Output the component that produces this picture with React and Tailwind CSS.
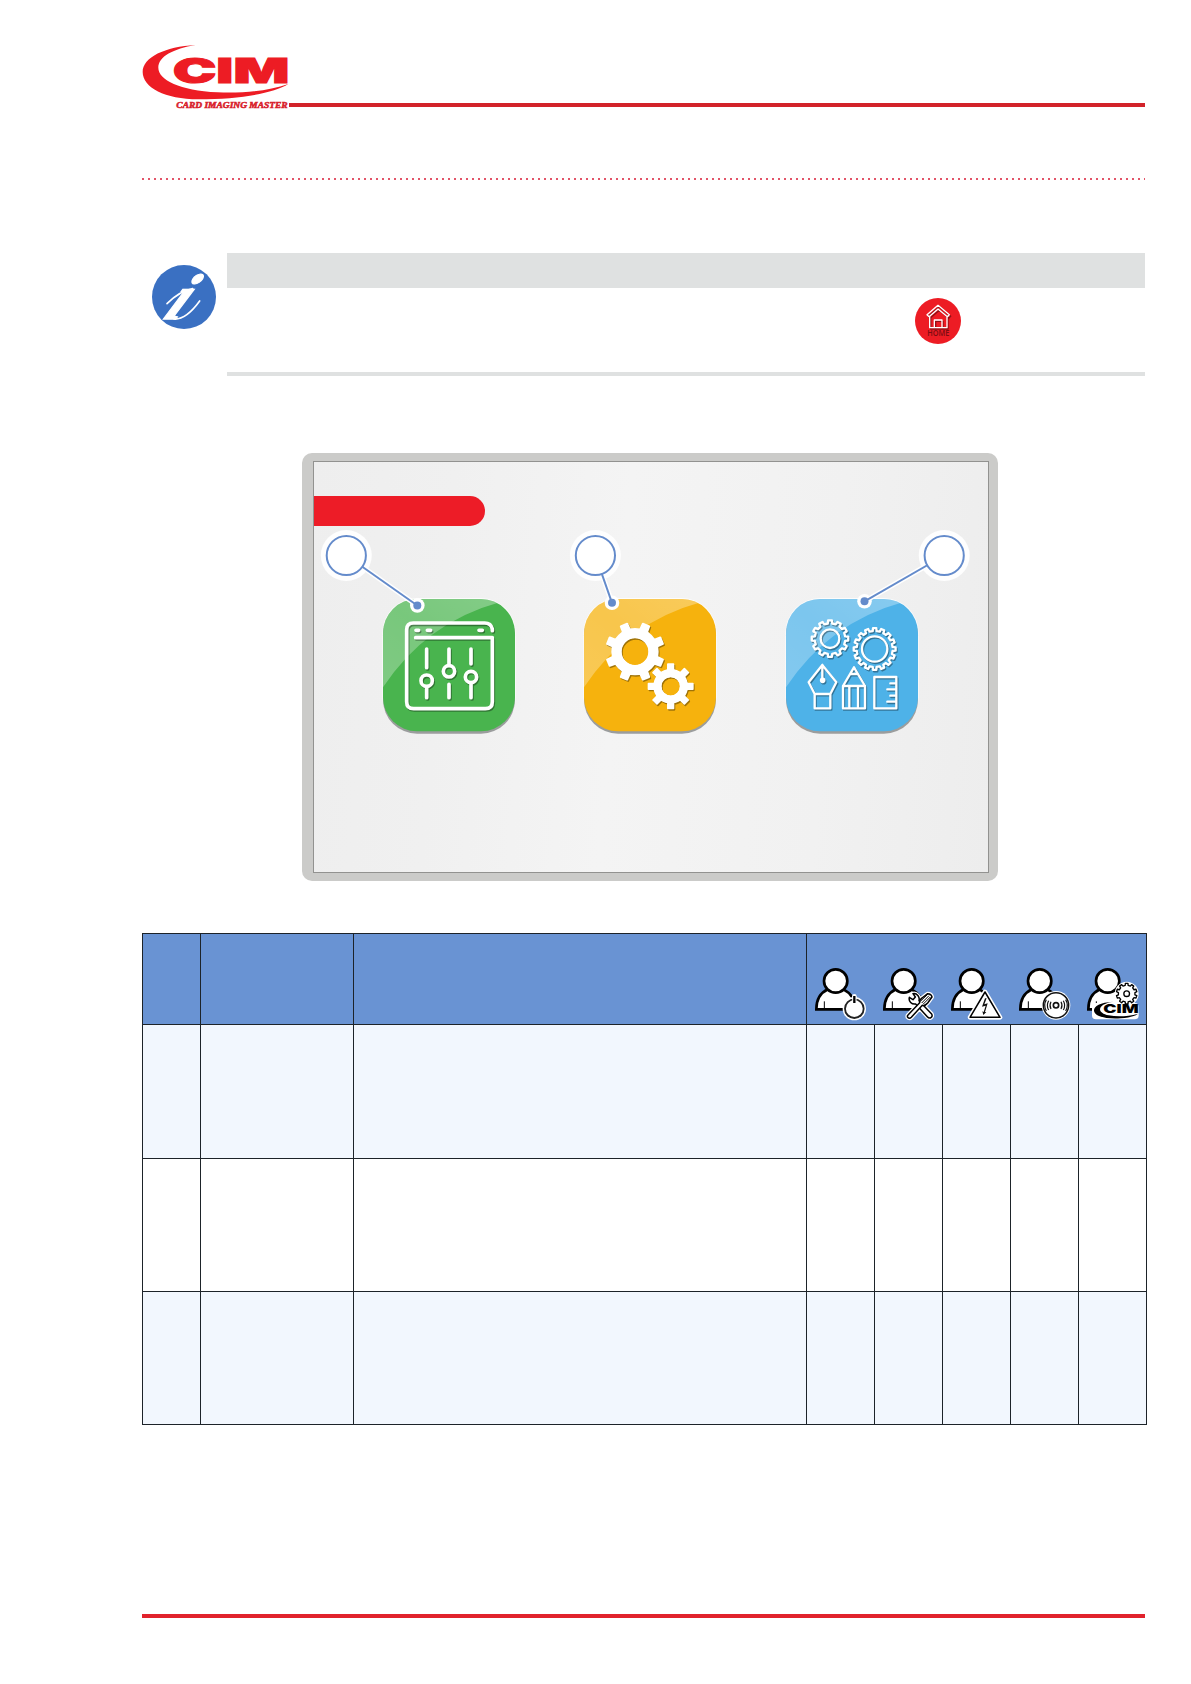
import React from 'react'

// builds the outline of a cog wheel, teeth are spread evenly round the centre
function gearPath(cx, cy, outer, inner, teeth, offset = 0, tip = 0.2, root = 0.28) {
  const step = (Math.PI * 2) / teeth
  const pts = []
  for (let i = 0; i < teeth; i++) {
    const a = i * step + offset - Math.PI / 2
    const corners = [
      [inner, -root],
      [outer, -tip],
      [outer, tip],
      [inner, root],
    ]
    corners.forEach(([r, k]) => {
      pts.push(`${(cx + r * Math.cos(a + k * step)).toFixed(1)} ${(cy + r * Math.sin(a + k * step)).toFixed(1)}`)
    })
  }
  return `M${pts.join('L')}Z`
}

const tableRows = [
  { id: 1, style: 'h-[134px] bg-[#f2f7fe]' },
  { id: 2, style: 'h-[133px] bg-white' },
  { id: 3, style: 'h-[133px] bg-[#f2f7fe]' },
]

function Logo() {
  return (
    <svg className="h-[65px] w-[147px] shrink-0 overflow-visible" viewBox="36 42 441 195">
      <path d="M197 45 C105 50 38 82 38 126 C38 172 105 208 205 208 C330 208 430 190 475 162 C410 185 330 190 262 187 C150 181 85 150 85 113 C85 80 130 56 197 45Z" fill="#ed1c24" />
      <text x="128" y="158" fontSize="102" fontWeight="900" fontFamily="Inter" textLength="350" lengthAdjust="spacingAndGlyphs" fill="#ed1c24" stroke="#ed1c24" strokeWidth="3">CIM</text>
      <text x="139" y="234" fontSize="25" fontWeight="700" fontStyle="italic" fontFamily="Liberation Serif" textLength="334" lengthAdjust="spacingAndGlyphs" fill="#d8202a" stroke="#d8202a" strokeWidth="1.5">CARD IMAGING MASTER</text>
    </svg>
  )
}

function InfoIcon() {
  return (
    <svg className="h-16 w-16 overflow-visible" viewBox="0 0 192 192">
      <circle cx="96" cy="96" r="96" fill="#3a70c2" />
      <g fill="none" stroke="#fff" strokeLinecap="round">
        <path d="M45 116C66 95 91 77 122 71" strokeWidth="5" />
        <path d="M66 162C91 164 119 141 143 108" strokeWidth="5" />
      </g>
      <text transform="translate(29 163) skewX(-30)" fontSize="194" fontWeight="700" fontStyle="italic" fontFamily="Liberation Serif" fill="#fff" stroke="#fff" strokeWidth="4">i</text>
    </svg>
  )
}

function HomeIcon() {
  return (
    <svg className="h-[46px] w-[46px]" viewBox="0 0 138 138">
      <circle cx="69" cy="69" r="69" fill="#ed1c24" />
      <g fill="none" strokeWidth="4" strokeLinejoin="round">
        <path d="M38 53L71 25L105 53L99 59L71 35L43 59ZM45 58V91H97V58M60 91V68H82V91" stroke="#8e1116" transform="translate(2 2)" />
        <path d="M36 50L69 22L103 50L97 56L69 33L42 56ZM44 55V89H96V55M58 89V66H81V89" stroke="#fff" />
      </g>
      <text x="37" y="114" fontSize="24" fontWeight="600" fontFamily="Open Sans" textLength="66" lengthAdjust="spacingAndGlyphs" fill="#7c0c12">HOME</text>
    </svg>
  )
}

/* glossy rounded tile, the icon is passed as children */
function Tile({ color, children }) {
  return (
    <svg className="h-[136px] w-[133px] overflow-visible" viewBox="0 0 399 408">
      <defs>
        <linearGradient id="gloss" x1="0" y1="1" x2="1" y2="0">
          <stop offset="0" stopColor="#fff" stopOpacity=".3" />
          <stop offset=".5" stopColor="#fff" stopOpacity=".26" />
          <stop offset="1" stopColor="#fff" stopOpacity=".32" />
        </linearGradient>
        <clipPath id="tileShape">
          <rect x="0" y="0" width="396" height="397" rx="102" />
        </clipPath>
      </defs>
      <rect x="-2" y="-3" width="400" height="401" rx="104" fill="#fff" fillOpacity=".8" />
      <rect x="0" y="7" width="396" height="397" rx="102" fill="#9b9d9d" />
      <rect x="0" y="0" width="396" height="397" rx="102" fill={color} />
      <path d="M0 0H350V10Q130 70 0 265Z" fill="url(#gloss)" clipPath="url(#tileShape)" />
      <g transform="translate(3 4)" className="opacity-35 brightness-0">{children}</g>
      {children}
    </svg>
  )
}

function SettingsArt() {
  return (
    <g fill="none" stroke="#fff" strokeWidth="11" strokeLinecap="round" strokeLinejoin="round">
      <path d="M328 95V90Q324 72 305 72H91Q71 72 71 92V308Q71 329 92 329H307Q328 329 328 308V116H98" />
      <path d="M99 94H107M133 94H143M288 94H298" />
      <path d="M131 150V206M131 266V296M198 150V196M198 256V296M264 150V195M264 254V296" />
      <circle cx="131" cy="245" r="17" />
      <circle cx="198" cy="217" r="17" />
      <circle cx="264" cy="234" r="17" />
    </g>
  )
}

function GearsArt() {
  return (
    <g fill="none" stroke="#fff" strokeLinejoin="round">
      <circle cx="153" cy="158" r="56" strokeWidth="30" />
      <circle cx="260" cy="262" r="40" strokeWidth="24" />
      <path fillRule="evenodd" fill="#fff" strokeWidth="6" d={gearPath(153, 158, 87, 67, 8, Math.PI / 8, 0.15, 0.21) + 'M110 158a43 43 0 1 0 86 0a43 43 0 1 0 -86 0Z'} />
      <path fillRule="evenodd" fill="#fff" strokeWidth="5" d={gearPath(260, 262, 67, 49, 8, 0, 0.16, 0.22) + 'M230 262a30 30 0 1 0 60 0a30 30 0 1 0 -60 0Z'} />
    </g>
  )
}

function ToolsArt() {
  return (
    <g fill="none" stroke="#fff" strokeWidth="7" strokeLinejoin="round" strokeLinecap="round">
      <path d={gearPath(132, 119, 55, 46, 12)} />
      <circle cx="132" cy="119" r="28" />
      <path d={gearPath(266, 150, 63, 54, 16)} />
      <circle cx="266" cy="150" r="38" />
      {/* pen nib */}
      <path d="M109 198L151 250L133 285H86L68 250ZM86 285V328H133V285M109 198V240" />
      <circle cx="110" cy="244" r="5" fill="#fff" />
      {/* pencil */}
      <path d="M171 328V261L204 205L237 261V328ZM171 261H237M190 262V326M216 262V326M194 225H214" />
      {/* ruler */}
      <path d="M265 234H331V328H265ZM313 253H330M304 271H330M313 290H330M304 308H330" />
    </g>
  )
}

const callouts = [
  { x: 44.3, y: 102.5, dx: 115.3, dy: 152.5 },
  { x: 293.4, y: 102.5, dx: 310, dy: 149.8 },
  { x: 642.2, y: 102.5, dx: 562.5, dy: 148.3 },
]

function Callouts() {
  return (
    <svg className="absolute left-[-12px] top-[-9px] h-[428px] w-[696px]" viewBox="0 0 696 428">
      {callouts.map((c) => (
        <g key={c.x}>
          <circle cx={c.x} cy={c.y} r="25.5" fill="#fff" fillOpacity=".9" />
          <path d={`M${c.x} ${c.y}L${c.dx} ${c.dy}`} stroke="#fff" strokeWidth="5" />
          <circle cx={c.dx} cy={c.dy} r="7.3" fill="#fff" />
          <path d={`M${c.x} ${c.y}L${c.dx} ${c.dy}`} stroke="#648bcb" strokeWidth="2" />
          <circle cx={c.dx} cy={c.dy} r="4" fill="#648bcb" />
          <circle cx={c.x} cy={c.y} r="19.6" fill="#fff" stroke="#648bcb" strokeWidth="2" />
        </g>
      ))}
    </svg>
  )
}

function Person({ children }) {
  return (
    <div className="w-[68px] pl-[7.3px] pt-[33.3px]">
      <svg className="h-[54px] w-[54px] overflow-visible" viewBox="0 0 162 162">
        <path d="M7 127C7 99 20 77 42 67L88 67C111 78 123 99 123 127Z" fill="#fff" stroke="#000" strokeWidth="8" />
        <path d="M31 103V126" stroke="#000" strokeWidth="3" />
        <circle cx="65" cy="42" r="35" fill="#fff" stroke="#000" strokeWidth="8" />
        {children}
      </svg>
    </div>
  )
}

function PowerBadge() {
  return (
    <g>
      <circle cx="121" cy="125" r="35" fill="#fff" />
      <path d="M121 88V105" stroke="#fff" strokeWidth="14" strokeLinecap="round" />
      <circle cx="121" cy="125" r="28" fill="#fff" stroke="#222" strokeWidth="5.5" />
      <path d="M121 89V106" stroke="#fff" strokeWidth="13" />
      <path d="M121 87V108" stroke="#000" strokeWidth="7" />
    </g>
  )
}

function WrenchBadge() {
  const wrench = 'M82 91L93 98L100 90L93 80C105 78 114 89 111 101L149 141Q153 149 145 153Q140 154 136 149L101 111C89 113 79 103 82 91Z'
  const driver = 'M78 144L113 107Q112 98 120 93L137 80Q148 80 150 90L137 108Q130 117 121 115L88 151Q82 157 77 151Q75 147 78 144Z'
  return (
    <g strokeLinejoin="round">
      <path d={wrench + driver} fill="#fff" stroke="#fff" strokeWidth="12" />
      <path d={wrench} fill="#fff" stroke="#000" strokeWidth="4.5" />
      <path d={driver} fill="#fff" stroke="#000" strokeWidth="4.5" />
      <path d="M119 108L141 86M124 111L145 90M115 103L137 82" stroke="#000" strokeWidth="3" />
    </g>
  )
}

function VoltageBadge() {
  return (
    <g strokeLinejoin="round">
      <path d="M105 75L150 151H60Z" fill="#fff" stroke="#fff" strokeWidth="14" />
      <path d="M105 75L150 151H60Z" fill="#fff" stroke="#000" strokeWidth="4.5" />
      <path d="M105 94L96 119L107 116L101 135L97 133L100 144L109 135L105 135L113 109L103 112L110 94Z" fill="#111" />
    </g>
  )
}

function SignalBadge() {
  return (
    <g fill="none" stroke="#111">
      <circle cx="114" cy="115" r="43" fill="#fff" stroke="none" />
      <circle cx="114" cy="115" r="38" strokeWidth="4.5" />
      <circle cx="114" cy="115" r="8" strokeWidth="5" />
      <path d="M99 104Q93 115 99 126M129 104Q135 115 129 126M92 101Q84 115 92 129M136 101Q144 115 136 129M85 98Q75 115 85 132M143 98Q153 115 143 132" strokeWidth="3.5" />
    </g>
  )
}

function CimBadge() {
  return (
    <g>
      <rect x="18" y="108" width="140" height="49" rx="12" fill="#fff" />
      <circle cx="122" cy="80" r="36" fill="#fff" />
      <path d={gearPath(122, 80, 31, 25, 10)} fill="#fff" stroke="#000" strokeWidth="4" strokeLinejoin="round" />
      <circle cx="122" cy="80" r="8.5" fill="#fff" stroke="#000" strokeWidth="4" />
      <path d="M82 104C42 106 24 117 24 131C25 149 65 157 104 154C131 152 148 147 156 140C125 149 93 150 68 145C31 138 32 111 82 104Z" fill="#000" />
      <text x="52" y="139" fontSize="37" fontWeight="900" fontFamily="Inter" textLength="106" lengthAdjust="spacingAndGlyphs" fill="#000">CIM</text>
    </g>
  )
}

export default function App() {
  return (
    <div className="flex h-[1684px] w-[1191px] flex-col overflow-hidden bg-white pl-[142px] pt-11 font-['Liberation_Sans',sans-serif]">
      {/* ---- HEADER ---- */}
      <header className="flex h-[65px] w-[1003px] items-end">
        <Logo />
        <div className="mb-0.5 h-1 flex-1 bg-[#d2232a]"></div>
      </header>
      <div className="mt-[69px] h-0.5 w-[1003px] bg-[repeating-linear-gradient(90deg,#e25468_0px,#e25468_2px,transparent_2px,transparent_6px)]"></div>

      {/* ---- INFO NOTE ---- */}
      <section className="mt-[73px] flex h-[123px] w-[1003px]">
        <div className="w-[85px] pl-2.5 pt-[11.5px]">
          <InfoIcon />
        </div>
        <div className="flex flex-1 flex-col border-b-4 border-[#dfe1e1]">
          <div className="h-[35px] bg-[#dfe1e1]"></div>
          <div className="flex justify-end pr-[184.5px] pt-2.5">
            <HomeIcon />
          </div>
        </div>
      </section>

      {/* ---- DISPLAY ---- */}
      <section className="ml-[160px] mt-[77px] h-[428px] w-[696px] rounded-[10px] bg-[#cbcbc9] pl-[11px] pr-[9px] pt-2">
        <div className="relative h-[412px] border border-[#929290] bg-[linear-gradient(95deg,#eeeeee_0%,#f0f0f0_20%,#f4f4f4_45%,#f1f1f1_75%,#ededed_100%)] pt-[34px]">
          <div className="h-[29.5px] w-[171px] rounded-r-full bg-[#ed1c27]"></div>
          <div className="ml-[68.5px] mt-[73.5px] flex gap-[68.7px]">
            <Tile color="#49b44e"><SettingsArt /></Tile>
            <Tile color="#f6b20d"><GearsArt /></Tile>
            <Tile color="#4eb2e8"><ToolsArt /></Tile>
          </div>
          <Callouts />
        </div>
      </section>

      {/* ---- TABLE ---- */}
      <table className="mt-[52px] w-[1005px] table-fixed border-collapse">
        <colgroup>
          <col className="w-[58px]" />
          <col className="w-[153px]" />
          <col className="w-[453px]" />
          <col className="w-[68px]" />
          <col className="w-[68px]" />
          <col className="w-[68px]" />
          <col className="w-[68px]" />
          <col className="w-[68px]" />
        </colgroup>
        <thead>
          <tr className="h-[91px] bg-[#6993d3]">
            <th className="border border-[#1d2329] p-0"></th>
            <th className="border border-[#1d2329] p-0"></th>
            <th className="border border-[#1d2329] p-0"></th>
            <th colSpan={5} className="border border-[#1d2329] p-0 align-top">
              <div className="flex *:shrink-0">
                <Person><PowerBadge /></Person>
                <Person><WrenchBadge /></Person>
                <Person><VoltageBadge /></Person>
                <Person><SignalBadge /></Person>
                <Person><CimBadge /></Person>
              </div>
            </th>
          </tr>
        </thead>
        <tbody>
          {tableRows.map((row) => (
            <tr key={row.id} className={row.style}>
              {Array.from({ length: 8 }).map((_, i) => (
                <td key={i} className="border border-[#1d2329] p-0"></td>
              ))}
            </tr>
          ))}
        </tbody>
      </table>

      <footer className="mt-auto mb-[66px] h-1 w-[1003px] shrink-0 bg-[#e1222c]"></footer>
    </div>
  )
}
